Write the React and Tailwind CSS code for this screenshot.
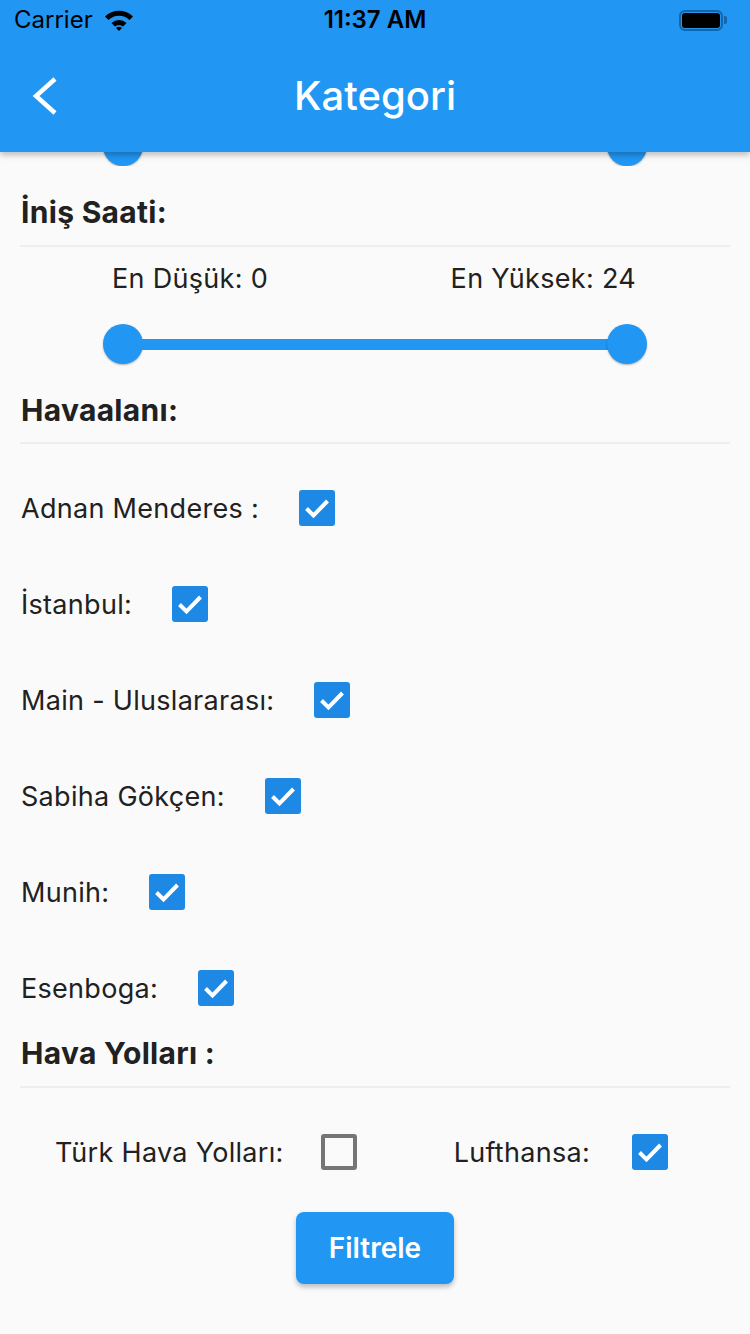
import React from 'react';

const Check = ({ checked }) =>
    checked ? (
        <div className="w-[36px] h-[36px] rounded-[3px] bg-[#1e88e5] flex items-center justify-center shrink-0">
            <svg width="36" height="36" viewBox="0 0 36 36">
                <path d="M7.5 18.5 L14.5 25.5 L28.5 11" fill="none" stroke="#fff" strokeWidth="4" />
            </svg>
        </div>
    ) : (
        <div className="w-[36px] h-[36px] rounded-[3px] border-[4px] border-[#757575] shrink-0" />
    );

const Heading = ({ children }) => (
    <div className="h-[40px] flex items-center px-[21px] text-[30px] tracking-[0.3px] font-bold text-[#212121] leading-none">
        {children}
    </div>
);

const Divider = ({ className }) => <div className={`mx-[20px] h-[2px] bg-[#eeeeee] ${className}`} />;

const Thumb = () => <div className="w-[40px] h-[40px] rounded-full bg-[#2196f3] shadow-[0_1px_2px_rgba(0,0,0,0.3)]" />;

const airports = ['Adnan Menderes :', 'İstanbul:', 'Main - Uluslararası:', 'Sabiha Gökçen:', 'Munih:', 'Esenboga:'];

export default function App() {
    return (
        <div className="min-h-[1334px] bg-[#fafafa] font-['Inter',sans-serif] text-[#212121]">
            {/* Status bar + app bar */}
            <div className="relative z-10 bg-[#2196f3] shadow-[0_3px_6px_rgba(0,0,0,0.25)]">
                <div className="h-[40px] flex items-center justify-between px-[14px]">
                    <div className="flex items-center gap-[10px] w-[200px]">
                        <span className="text-[24px] text-black leading-none">Carrier</span>
                        <svg width="32" height="24" viewBox="0 0 32 24">
                            <path d="M2 8.5 A20 20 0 0 1 30 8.5 L26.5 12 A15 15 0 0 0 5.5 12 Z" fill="#000" />
                            <path d="M8.5 15 A11 11 0 0 1 23.5 15 L20 18.5 A6 6 0 0 0 12 18.5 Z" fill="#000" />
                            <path d="M13 20 A4 4 0 0 1 19 20 L16 23 Z" fill="#000" />
                        </svg>
                    </div>
                    <span className="text-[24px] font-semibold text-black leading-none">11:37 AM</span>
                    <div className="w-[200px] flex justify-end items-center pr-[9px]">
                        <div className="w-[44px] h-[21px] rounded-[6px] border-[2px] border-[#1565a8] p-[1px]">
                            <div className="w-full h-full rounded-[3px] bg-black" />
                        </div>
                        <div className="w-[3px] h-[8px] rounded-r-[2px] bg-[#1565a8] ml-[1px]" />
                    </div>
                </div>
                <div className="h-[112px] flex items-center relative">
                    <svg className="absolute left-[28px] top-[36px]" width="34" height="40" viewBox="0 0 34 40">
                        <path d="M27 3 L8 20 L27 37" fill="none" stroke="#fff" strokeWidth="4.5" />
                    </svg>
                    <div className="flex-1 text-center text-white text-[40px] font-medium leading-none">Kategori</div>
                </div>
            </div>

            {/* Previous slider, scrolled off */}
            <div className="h-[14px] overflow-hidden">
                <div className="flex justify-between px-[103px] -mt-[26px]">
                    <Thumb />
                    <Thumb />
                </div>
            </div>

            <div className="mt-[26px]">
                <Heading>İniş Saati:</Heading>
            </div>
            <Divider className="mt-[13px]" />

            <div className="mt-[14px] h-[34px] flex items-center text-[27px] tracking-[0.3px] leading-none">
                <span className="ml-[112px]">En Düşük: 0</span>
                <span className="ml-auto mr-[114px]">En Yüksek: 24</span>
            </div>

            {/* Range slider */}
            <div className="mt-[29px] h-[40px] px-[103px] flex items-center">
                <Thumb />
                <div className="flex-1 h-[11px] bg-[#2196f3] -mx-[2px]" />
                <Thumb />
            </div>

            <div className="mt-[26px]">
                <Heading>Havaalanı:</Heading>
            </div>
            <Divider className="mt-[12px]" />

            <div className="mt-[40px] flex flex-col gap-[48px]">
                {airports.map((a) => (
                    <div key={a} className="h-[48px] flex items-center px-[21px]">
                        <span className="text-[27px] tracking-[0.3px] leading-none">{a}</span>
                        <div className="ml-[40px]">
                            <Check checked />
                        </div>
                    </div>
                ))}
            </div>

            <div className="mt-[21px]">
                <Heading>Hava Yolları :</Heading>
            </div>
            <Divider className="mt-[13px]" />

            <div className="mt-[40px] h-[48px] flex items-center">
                <span className="ml-[55px] text-[27px] tracking-[0.3px] leading-none">Türk Hava Yolları:</span>
                <div className="ml-[37px]">
                    <Check checked={false} />
                </div>
                <span className="ml-[97px] text-[27px] tracking-[0.3px] leading-none">Lufthansa:</span>
                <div className="ml-[42px]">
                    <Check checked />
                </div>
            </div>

            <div className="mt-[36px] flex justify-center">
                <button className="w-[158px] h-[72px] rounded-[8px] bg-[#2196f3] text-white text-[28px] font-semibold shadow-[0_3px_5px_rgba(0,0,0,0.25)]">
                    Filtrele
                </button>
            </div>
        </div>
    );
}
